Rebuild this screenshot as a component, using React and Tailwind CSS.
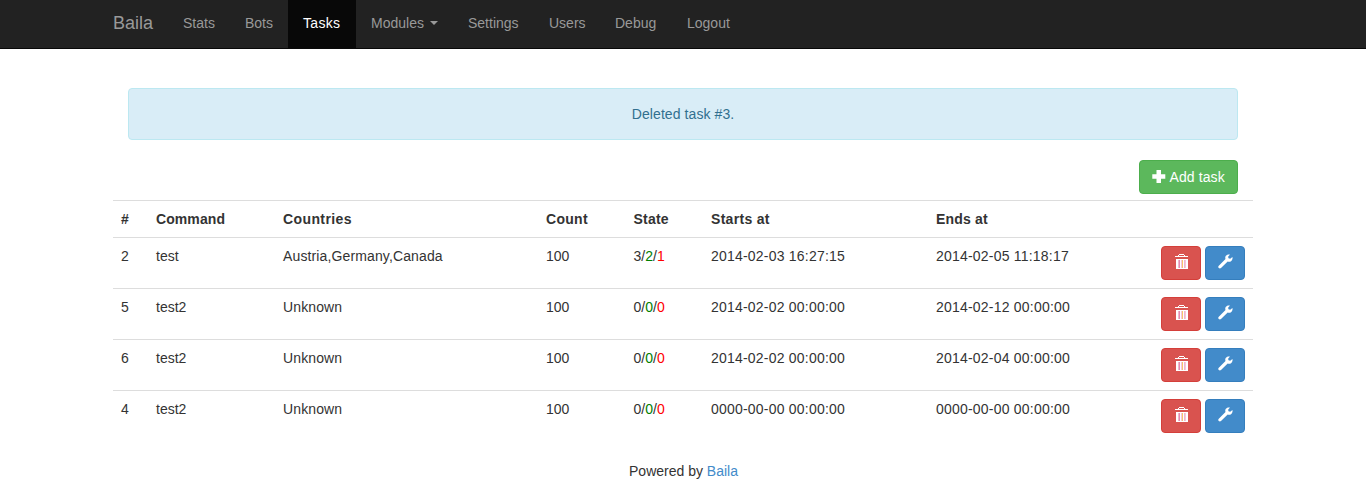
const NAV = [
  { label: 'Stats', width: 'w-[62px]' },
  { label: 'Bots', width: 'w-[58px]' },
  { label: 'Tasks', width: 'w-[68px]', active: true },
  { label: 'Modules', width: 'w-[97px]', caret: true },
  { label: 'Settings', width: 'w-[81px]' },
  { label: 'Users', width: 'w-[66px]' },
  { label: 'Debug', width: 'w-[72px]' },
  { label: 'Logout', width: 'w-[74px]' },
];

const TASKS = [
  { id: 2, command: 'test', countries: 'Austria,Germany,Canada', count: 100, state: [3, 2, 1], starts: '2014-02-03 16:27:15', ends: '2014-02-05 11:18:17' },
  { id: 5, command: 'test2', countries: 'Unknown', count: 100, state: [0, 0, 0], starts: '2014-02-02 00:00:00', ends: '2014-02-12 00:00:00' },
  { id: 6, command: 'test2', countries: 'Unknown', count: 100, state: [0, 0, 0], starts: '2014-02-02 00:00:00', ends: '2014-02-04 00:00:00' },
  { id: 4, command: 'test2', countries: 'Unknown', count: 100, state: [0, 0, 0], starts: '0000-00-00 00:00:00', ends: '0000-00-00 00:00:00' },
];

const GRID = 'grid grid-cols-[35px_127px_263px_87.5px_77.5px_225px_1fr] border-t border-[#ddd] pl-2 pr-2 pt-2 pb-2';

function TrashIcon() {
  return (
    <svg width="14" height="18" viewBox="0 0 14 18" fill="#fff" shapeRendering="crispEdges">
      <path d="M5 0h5v1h-5zM4 1h1v1H4zM10 1h1v1h-1zM1 2h13v1H1z" />
      <path d="M2 5h12v1H2zM2 5h1v10H2zM13 5h1v10h-1zM2 14h12v1H2zM3 6h1v8H3zM6 6h1v8H6zM9 6h1v8H9zM12 6h1v8h-1z" />
      <path fill="#f0b8c8" d="M4 6h1v8H4zM10 6h1v8h-1z" />
      <path fill="#e58ab4" d="M5 6h1v8H5z" />
      <path fill="#f7c46c" d="M8 6h1v8H8z" />
      <path fill="#f3c6e0" d="M7 6h1v8H7zM11 6h1v8h-1z" />
    </svg>
  );
}

function WrenchIcon() {
  return (
    <svg width="17" height="18" viewBox="0 0 17 18" fill="#fff">
      <path transform="translate(.8 -.4)" d="M14.6 3.4 12.4 5.2 10.7 4.7 10.3 3.1 12.2 1C10.6.5 8.700 1 7.900 2.500 7.300 3.600 7.400 4.600 7.700 5.500L1 12.200C.3 12.900.3 13.900 1 14.500 1.600 15.100 2.600 15.100 3.200 14.500L9.900 7.900C11 8.300 12.400 8.200 13.500 7.300 14.700 6.300 15 4.800 14.600 3.400z" />
    </svg>
  );
}

export default function App() {
  return (
    <div className="h-[500px] overflow-hidden bg-white font-['Liberation_Sans',Arial,sans-serif] text-[14px] leading-5 text-[#333]">
      <nav className="h-[49px] border-b border-[#080808] bg-[#222]">
        <div className="mx-auto flex h-12 w-[1140px] pb-[2px] text-[#999]">
          <a className="flex w-[55px] items-center text-[18px]">Baila</a>
          {NAV.map((n) => (
            <a
              key={n.label}
              className={`${n.width} -mb-[2px] flex items-center px-[15px] pb-[2px] ${n.active ? 'bg-[#080808] tracking-[0.3px] text-white' : ''}`}
            >
              {n.label}
              {n.caret && <span className="ml-[6px] border-x-4 border-t-4 border-x-transparent border-t-[#999]" />}
            </a>
          ))}
        </div>
      </nav>

      <main className="mx-auto w-[1140px] pt-[39px]">
        <div className="mx-[15px] flex h-[52px] items-center justify-center rounded-[4px] border border-[#bce8f1] bg-[#d9edf7] tracking-[0.08px] text-[#31708f]">
          Deleted task #3.
        </div>
        <div className="mx-[15px] mt-5 mb-[6px] flex justify-end">
          <button className="flex h-[34px] w-[99px] items-center rounded-[4px] border border-[#4cae4c] bg-[#5cb85c] pl-3 tracking-[0.1px] whitespace-nowrap text-white">
            <svg className="mr-[3.5px] shrink-0" width="14" height="14" viewBox="0 0 14 14" fill="#fff">
              <path d="M4.500 0h4.500v4.300h4.300v4.500H9V13H4.500V8.800H.3V4.300h4.200z" />
            </svg>
            Add task
          </button>
        </div>

        <div>
          <div className={`${GRID} h-[37px] font-bold`}>
            <span>#</span>
            <span className="tracking-[0.08px]">Command</span>
            <span className="tracking-[0.4px]">Countries</span>
            <span className="tracking-[0.3px]">Count</span>
            <span className="tracking-[0.2px]">State</span>
            <span className="tracking-[0.3px]">Starts at</span>
            <span className="tracking-[0.2px]">Ends at</span>
          </div>
          {TASKS.map((t) => (
            <div key={t.id} className={`${GRID} h-[51px]`}>
              <span>{t.id}</span>
              <span>{t.command}</span>
              <span className="tracking-[0.13px]">{t.countries}</span>
              <span>{t.count}</span>
              <span>
                {t.state[0]}/<span className="text-[#008000]">{t.state[1]}</span>/<span className="text-[#f00]">{t.state[2]}</span>
              </span>
              <span className="tracking-[0.21px]">{t.starts}</span>
              <div className="flex justify-between">
                <span className="tracking-[0.21px]">{t.ends}</span>
                <div className="flex gap-1">
                  <button className="flex h-[34px] w-10 items-center justify-center rounded-[4px] border border-[#d43f3a] bg-[#d9534f]">
                    <TrashIcon />
                  </button>
                  <button className="flex h-[34px] w-10 items-center justify-center rounded-[4px] border border-[#357ebd] bg-[#428bca]">
                    <WrenchIcon />
                  </button>
                </div>
              </div>
            </div>
          ))}
        </div>
        <footer className="mt-5 pl-px text-center">
          Powered by <a className="text-[#428bca]">Baila</a>
        </footer>
      </main>
    </div>
  );
}
